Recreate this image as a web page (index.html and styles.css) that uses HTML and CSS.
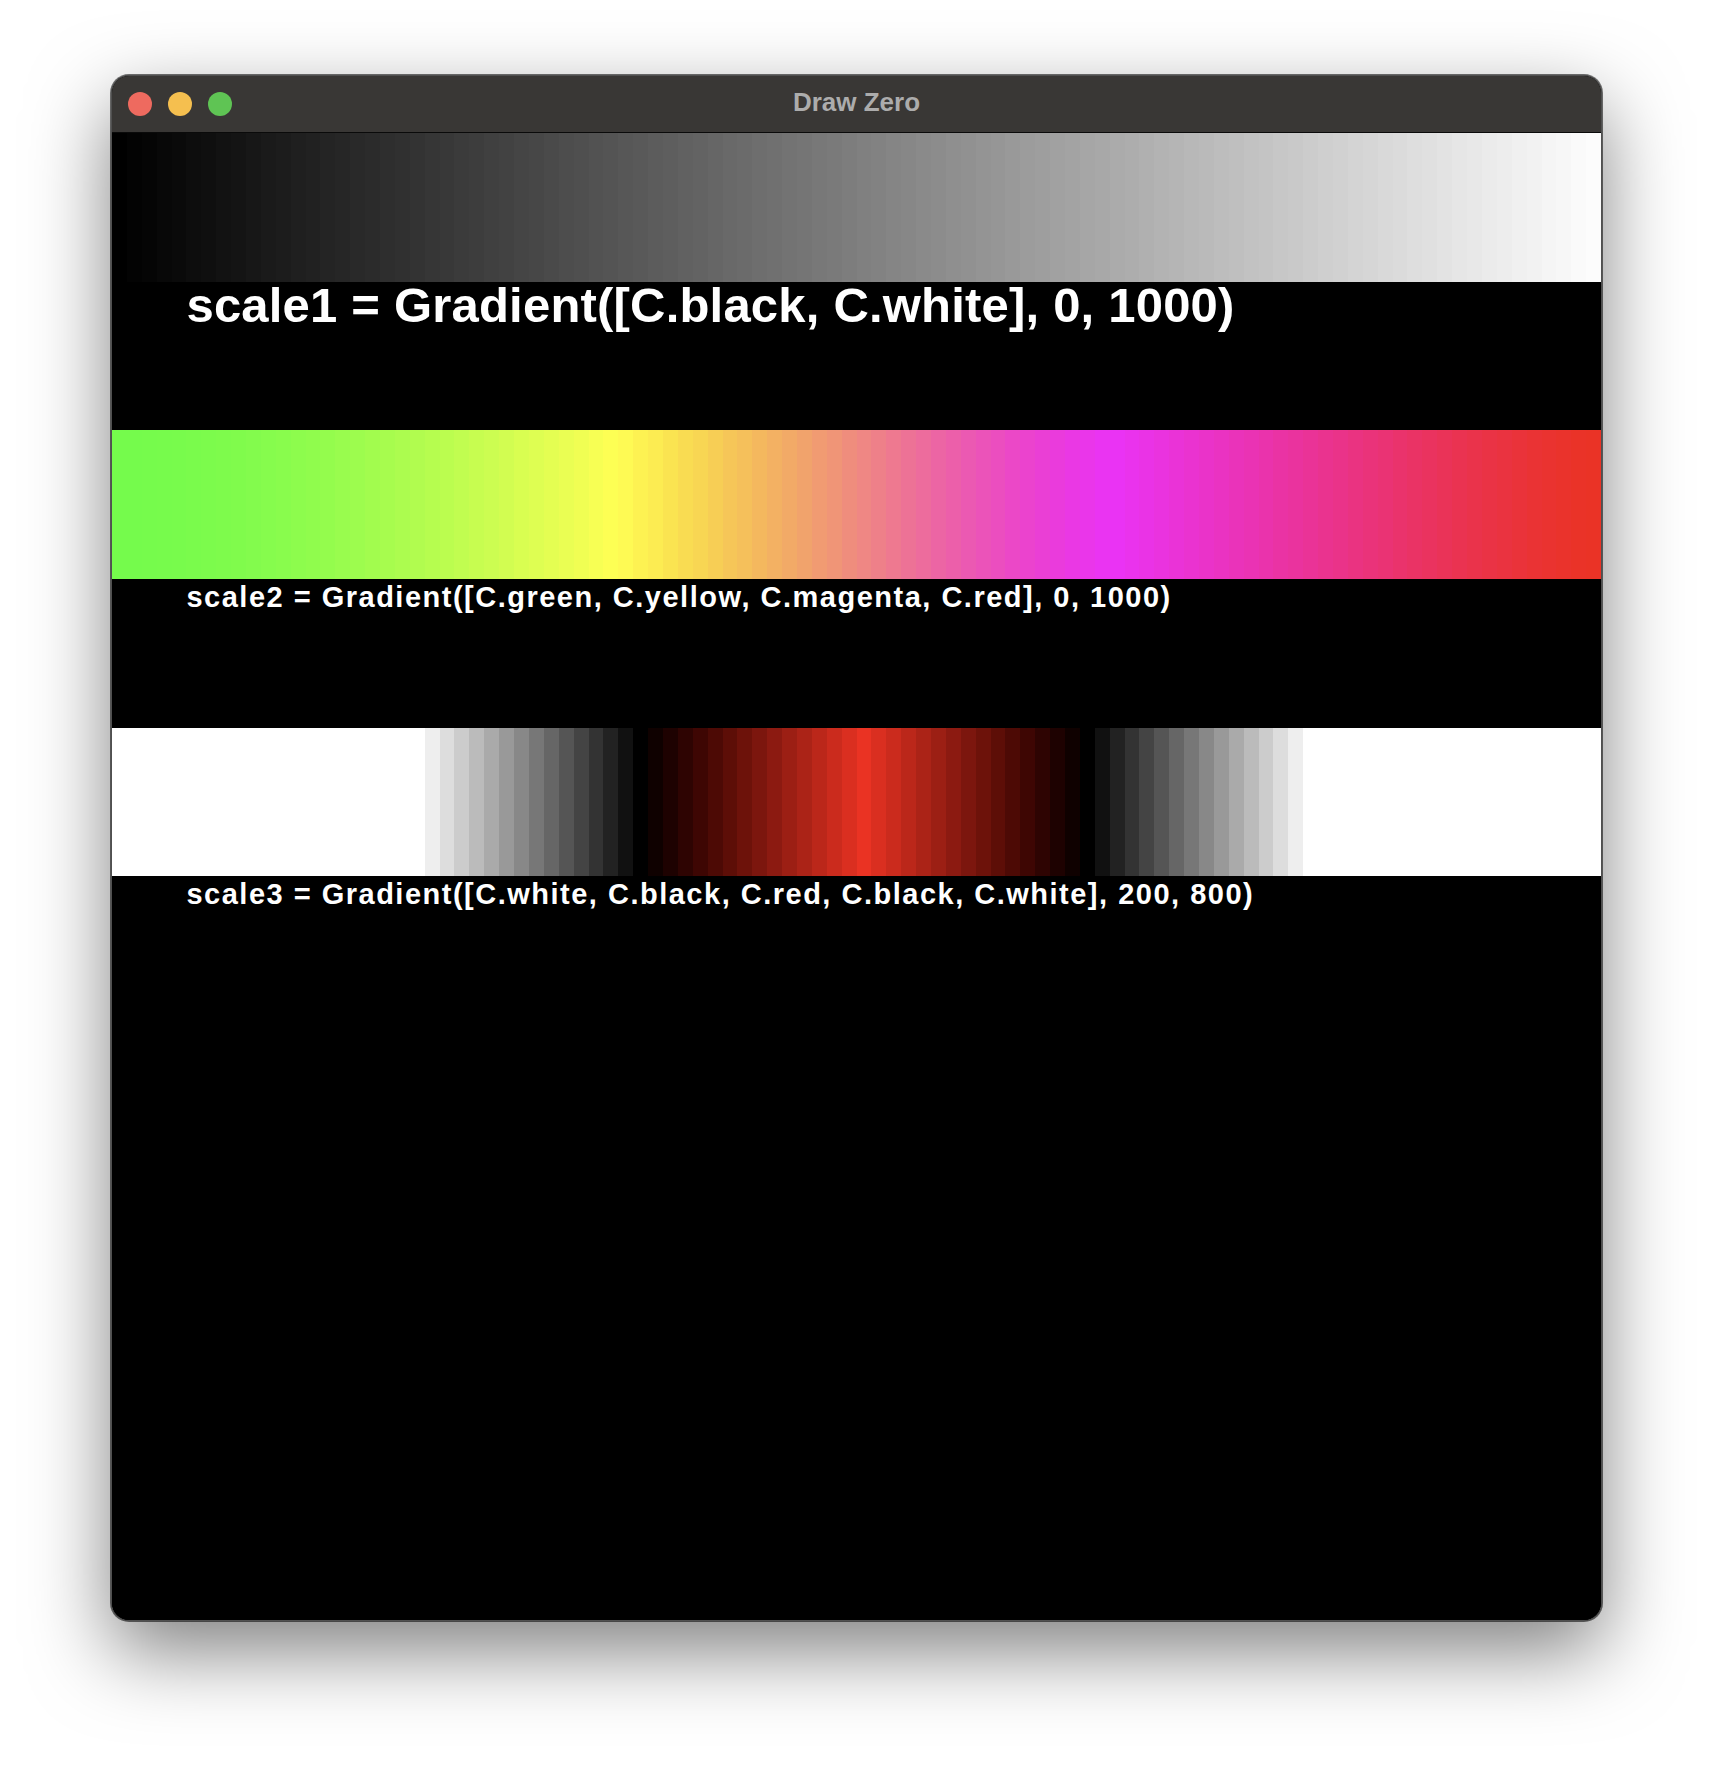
FILE: index.html
```html
<!DOCTYPE html>
<html lang="en">
<head>
<meta charset="utf-8">
<title>Draw Zero</title>
<link rel="stylesheet" href="styles.css">
</head>
<body>
<div class="window">
  <div class="titlebar">
    <div class="lights">
      <span class="light red"></span>
      <span class="light yellow"></span>
      <span class="light green"></span>
    </div>
    <div class="title">Draw Zero</div>
    <div class="spacer"></div>
  </div>
  <div class="canvas">
    <section class="row">
      <div class="band" data-colors="black,white" data-min="0" data-max="1000"></div>
      <div class="label label-big">scale1 = Gradient([C.black, C.white], 0, 1000)</div>
    </section>
    <section class="row">
      <div class="band" data-colors="green,yellow,magenta,red" data-min="0" data-max="1000"></div>
      <div class="label label-small">scale2 = Gradient([C.green, C.yellow, C.magenta, C.red], 0, 1000)</div>
    </section>
    <section class="row">
      <div class="band" data-colors="white,black,red,black,white" data-min="200" data-max="800"></div>
      <div class="label label-small">scale3 = Gradient([C.white, C.black, C.red, C.black, C.white], 200, 800)</div>
    </section>
  </div>
</div>
<script src="script.js"></script>
</body>
</html>
```

FILE: styles.css
```css
html, body {
  margin: 0;
  padding: 0;
  background: #ffffff;
}

body {
  width: 1714px;
  height: 1770px;
  padding: 75px 0 0 111px;
  box-sizing: border-box;
  overflow: hidden;
}

.window {
  width: 1491px;
  height: 1546px;
  box-sizing: border-box;
  border: 1px solid #505050;
  border-radius: 18px;
  overflow: hidden;
  background: #000;
  box-shadow: 0 30px 80px rgba(0, 0, 0, 0.5), 0 0 0 1px rgba(0, 0, 0, 0.55);
  display: flex;
  flex-direction: column;
}

.titlebar {
  height: 56px;
  flex: none;
  background: #393735;
  border-bottom: 1px solid #0a0a0a;
  display: grid;
  grid-template-columns: 1fr auto 1fr;
  align-items: center;
}

.lights {
  display: flex;
  gap: 16px;
  padding-left: 16px;
}

.light {
  width: 24px;
  height: 24px;
  border-radius: 50%;
  display: block;
}

.light.red { background: #ee6a5f; }
.light.yellow { background: #f5bf4f; }
.light.green { background: #5fc454; }

.title {
  font-family: "Liberation Sans", Arial, sans-serif;
  font-weight: bold;
  font-size: 26px;
  color: #acacac;
  margin-top: -3px;
}

.canvas {
  flex: 1;
  background: #000;
  display: flex;
  flex-direction: column;
}

.row {
  height: 20%;
  display: flex;
  flex-direction: column;
}

.band {
  height: 50%;
  flex: none;
  display: flex;
}

.step {
  flex: 1;
}

.label {
  font-family: "Liberation Sans", Arial, Helvetica, sans-serif;
  font-weight: bold;
  color: #ffffff;
  padding-left: 5%;
  white-space: nowrap;
}

.label-big {
  font-size: 49px;
  line-height: 46px;
  letter-spacing: 0.2px;
}

.label-small {
  font-size: 29px;
  line-height: 36px;
  letter-spacing: 1.5px;
}
```

FILE: script.js
```js
// Source colours are plain sRGB; the screenshot shows them converted to Display P3.
const C = {
  black: [0, 0, 0],
  white: [255, 255, 255],
  green: [0, 255, 0],
  yellow: [255, 255, 0],
  magenta: [255, 0, 255],
  red: [255, 0, 0]
};

function toLinear(v) {
  v /= 255;
  return v <= 0.04045 ? v / 12.92 : Math.pow((v + 0.055) / 1.055, 2.4);
}

function toEncoded(v) {
  v = Math.max(0, Math.min(1, v));
  const e = v <= 0.0031308 ? v * 12.92 : 1.055 * Math.pow(v, 1 / 2.4) - 0.055;
  return Math.round(e * 255);
}

function srgbToP3(c) {
  const r = toLinear(c[0]), g = toLinear(c[1]), b = toLinear(c[2]);
  return [
    toEncoded(0.8225 * r + 0.1774 * g),
    toEncoded(0.0332 * r + 0.9669 * g),
    toEncoded(0.0171 * r + 0.0724 * g + 0.9108 * b)
  ];
}

document.querySelectorAll('.band').forEach(function (band) {
  const stops = band.dataset.colors.split(',').map(function (n) { return C[n.trim()]; });
  const lo = +band.dataset.min;
  const hi = +band.dataset.max;
  for (let i = 0; i < 100; i++) {
    const x = i * 10;
    let t = (x - lo) / (hi - lo);
    t = Math.max(0, Math.min(1, t));
    const seg = t * (stops.length - 1);
    const k = Math.min(Math.floor(seg), stops.length - 2);
    const f = seg - k;
    const c = stops[k].map(function (v, j) { return Math.round(v + (stops[k + 1][j] - v) * f); });
    const p = srgbToP3(c);
    const d = document.createElement('div');
    d.className = 'step';
    d.style.background = 'rgb(' + p.join(',') + ')';
    band.appendChild(d);
  }
});
```
